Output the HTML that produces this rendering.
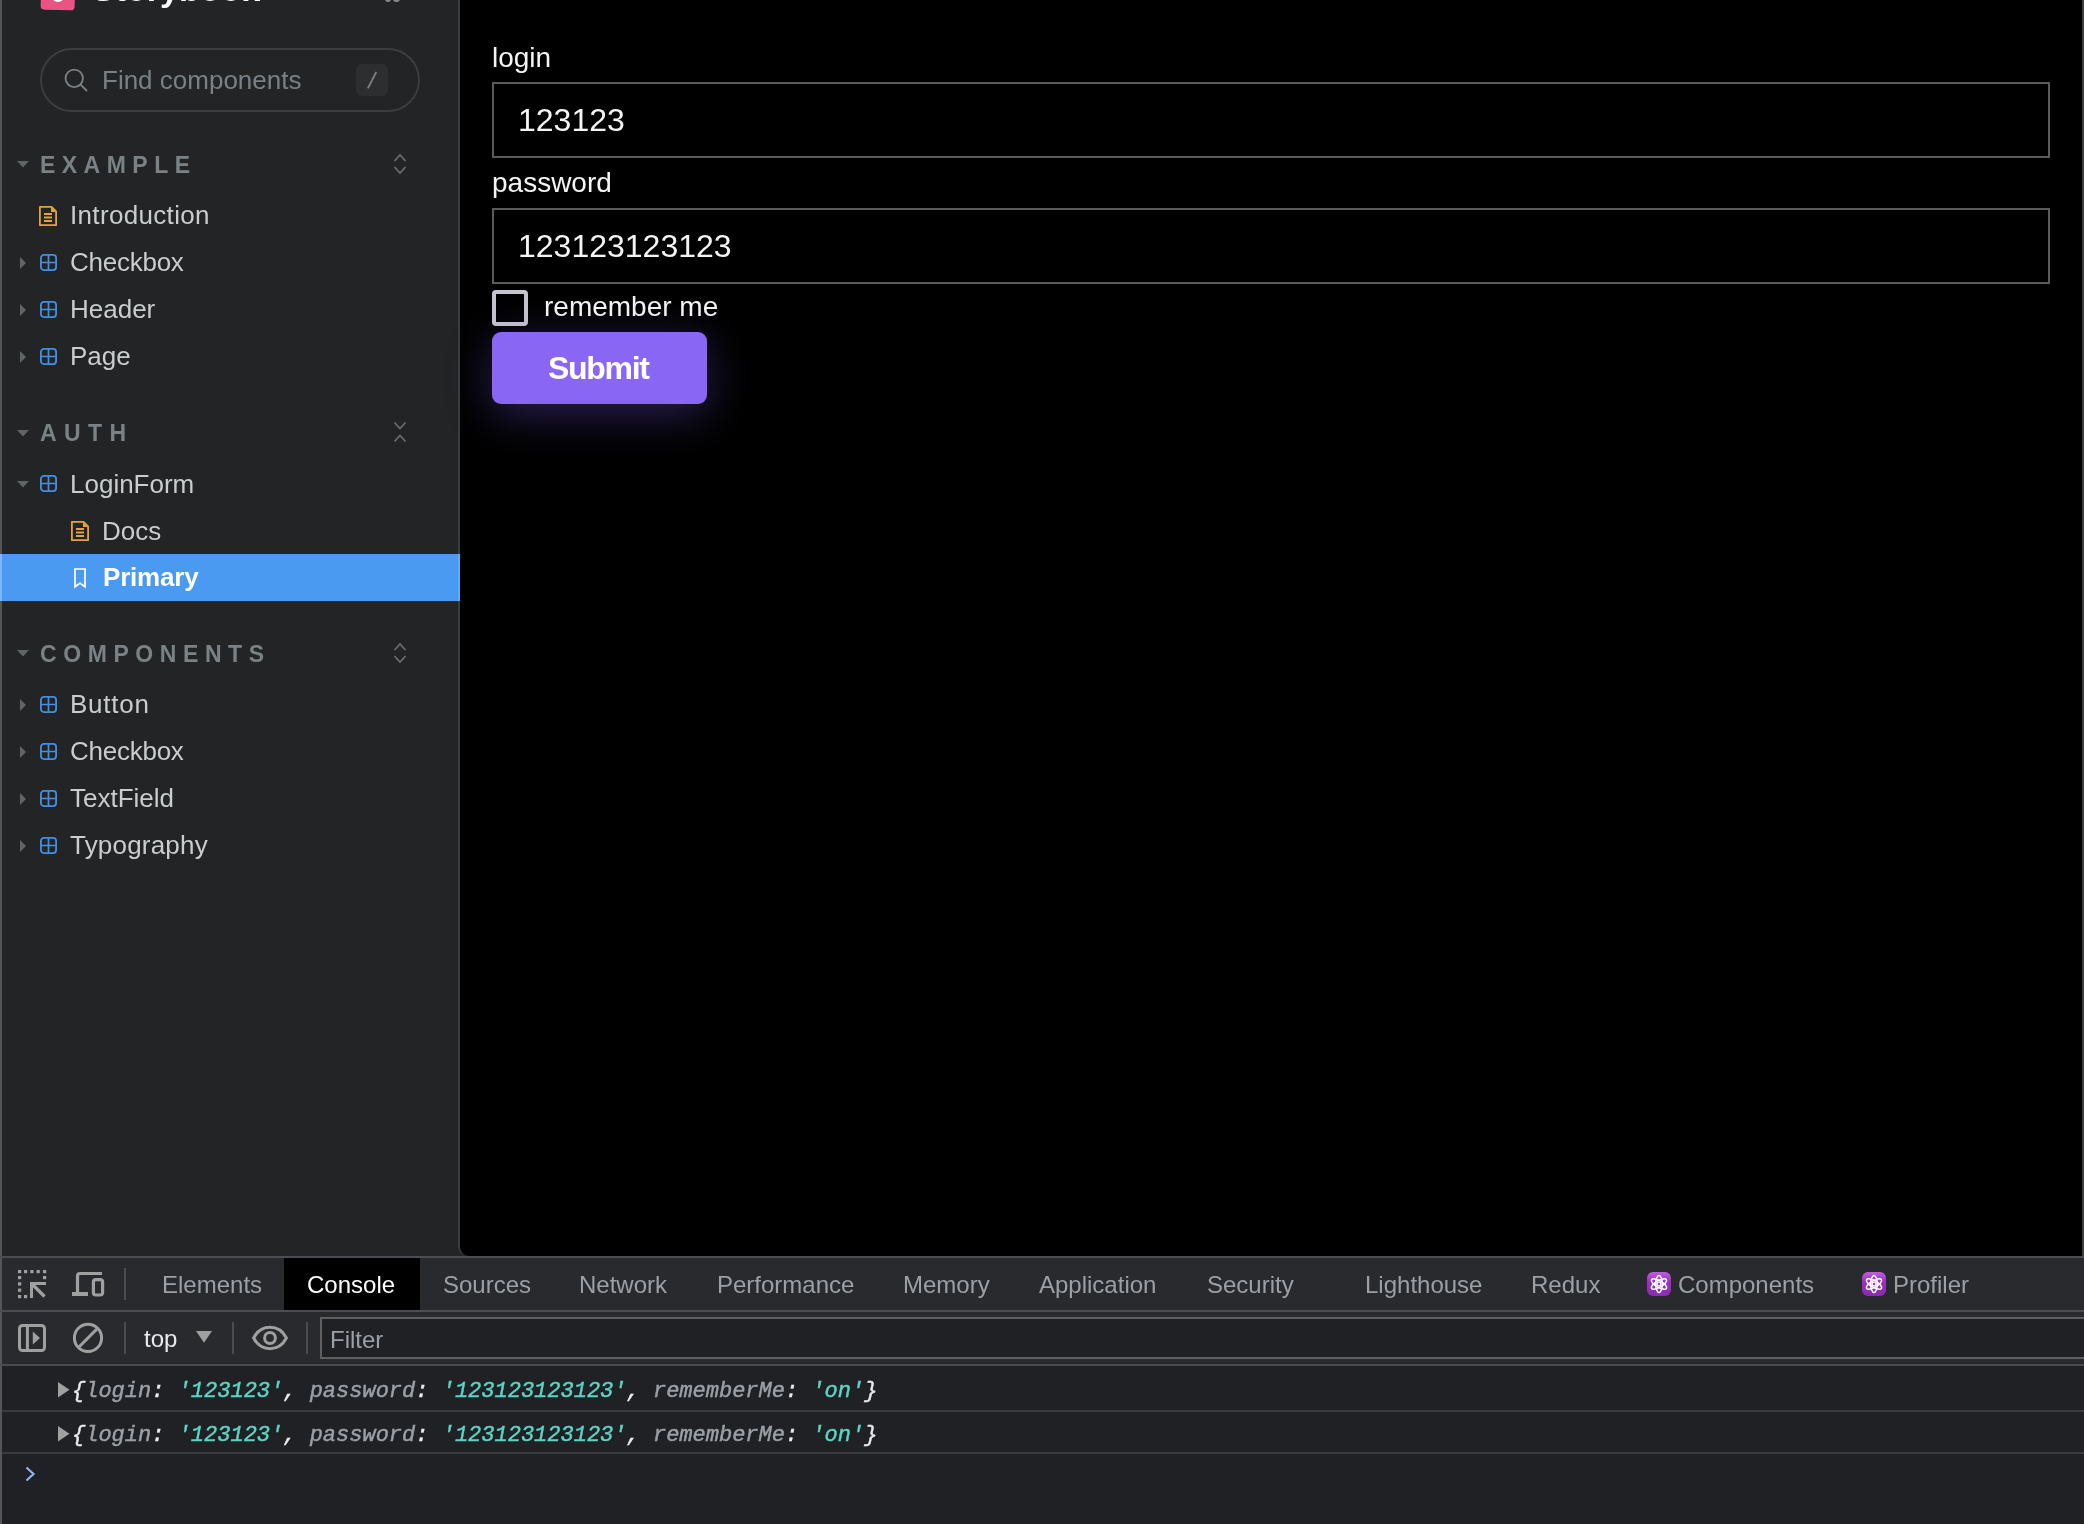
<!DOCTYPE html><html><head><meta charset="utf-8"><style>
*{margin:0;padding:0;box-sizing:border-box}
html,body{width:2084px;height:1524px;overflow:hidden;background:#222425;font-family:"Liberation Sans",sans-serif}
.a{position:absolute}
.t{position:absolute;white-space:pre;will-change:transform}
svg{position:absolute;overflow:visible}
</style></head><body><div class="a" style="left:0;top:0;width:2px;height:1524px;background:#545557"></div>
<div class="a" style="left:458px;top:-20px;width:1624px;height:1276px;background:#000;border-left:2px solid #3b3c3e;border-bottom-left-radius:10px"></div>
<div class="a" style="left:2082px;top:0;width:2px;height:1256px;background:#3c3d3e"></div>
<div class="a" style="left:41px;top:-26px;width:34px;height:36px;background:#ea5485;border-radius:4px;transform:rotate(1.5deg)"></div>
<div class="a" style="left:52px;top:-6px;width:12px;height:8px;background:#fff;border-radius:0 0 6px 6px"></div>
<div class="t" style="left:92px;top:-27.98px;font-size:34px;line-height:34px;color:#ffffff;font-weight:700;font-family:'Liberation Sans', sans-serif;letter-spacing:0px;font-style:normal;">Storybook</div>
<div class="a" style="left:385px;top:-4px;width:6px;height:6px;border-radius:50%;background:#858b8f"></div>
<div class="a" style="left:393px;top:-4px;width:6.5px;height:6px;border-radius:50%;background:#858b8f"></div>
<div class="a" style="left:40px;top:48px;width:380px;height:64px;border:2px solid #3b3e40;border-radius:32px"></div>
<svg style="left:64px;top:68px" width="24" height="24"><circle cx="10.25" cy="10.35" r="8.7" fill="none" stroke="#798186" stroke-width="1.8"/><path d="M16.6 16.6 L22.5 22.5" stroke="#798186" stroke-width="1.8" stroke-linecap="round"/></svg>
<div class="t" style="left:102px;top:66.99px;font-size:26px;line-height:26px;color:#798186;font-weight:400;font-family:'Liberation Sans', sans-serif;letter-spacing:0px;font-style:normal;">Find components</div>
<div class="a" style="left:356px;top:64px;width:32px;height:32px;background:#2c2e30;border-radius:6px"></div>
<svg style="left:356px;top:64px" width="32" height="32"><path d="M20.3 8 L11.8 24.3" stroke="#798186" stroke-width="1.8"/></svg>
<svg style="left:17px;top:161px" width="12" height="7"><path d="M0 0 L12 0 L6 6.5 Z" fill="#5f6466"/></svg>
<div class="t" style="left:40px;top:153.53px;font-size:23px;line-height:23px;color:#7b8286;font-weight:700;font-family:'Liberation Sans', sans-serif;letter-spacing:6.47px;font-style:normal;">EXAMPLE</div>
<svg style="left:393px;top:153px" width="14" height="22"><path d="M1.5 8 L7 2 L12.5 8 M1.5 14 L7 20 L12.5 14" fill="none" stroke="#6e7174" stroke-width="1.6"/></svg>
<svg style="left:39px;top:205.8px" width="18" height="21"><path d="M0.9 0.9 H12.6 L17.1 5.4 V19.2 H0.9 Z" fill="none" stroke="#e0a43e" stroke-width="1.8" stroke-linejoin="round"/><path d="M12 1 V6 H17 Z" fill="#e0a43e"/><path d="M5 8 H13 M5 11.5 H13 M5 15 H13" stroke="#e0a43e" stroke-width="1.8"/></svg>
<div class="t" style="left:70px;top:202.49px;font-size:26px;line-height:26px;color:#c9cdcf;font-weight:400;font-family:'Liberation Sans', sans-serif;letter-spacing:0.33px;font-style:normal;">Introduction</div>
<svg style="left:20px;top:256.8px" width="6" height="12"><path d="M0 0 L6 6 L0 12 Z" fill="#5f6466"/></svg>
<svg style="left:39.5px;top:253.5px" width="17" height="17"><rect x="0.9" y="0.9" width="15.2" height="15.2" rx="3" fill="none" stroke="#4290e4" stroke-width="1.8"/><path d="M8.5 1 V16 M1 8.5 H16" stroke="#4290e4" stroke-width="1.7"/></svg>
<div class="t" style="left:70px;top:249.49px;font-size:26px;line-height:26px;color:#c9cdcf;font-weight:400;font-family:'Liberation Sans', sans-serif;letter-spacing:-0.25px;font-style:normal;">Checkbox</div>
<svg style="left:20px;top:303.8px" width="6" height="12"><path d="M0 0 L6 6 L0 12 Z" fill="#5f6466"/></svg>
<svg style="left:39.5px;top:300.5px" width="17" height="17"><rect x="0.9" y="0.9" width="15.2" height="15.2" rx="3" fill="none" stroke="#4290e4" stroke-width="1.8"/><path d="M8.5 1 V16 M1 8.5 H16" stroke="#4290e4" stroke-width="1.7"/></svg>
<div class="t" style="left:70px;top:296.49px;font-size:26px;line-height:26px;color:#c9cdcf;font-weight:400;font-family:'Liberation Sans', sans-serif;letter-spacing:0px;font-style:normal;">Header</div>
<svg style="left:20px;top:350.8px" width="6" height="12"><path d="M0 0 L6 6 L0 12 Z" fill="#5f6466"/></svg>
<svg style="left:39.5px;top:347.5px" width="17" height="17"><rect x="0.9" y="0.9" width="15.2" height="15.2" rx="3" fill="none" stroke="#4290e4" stroke-width="1.8"/><path d="M8.5 1 V16 M1 8.5 H16" stroke="#4290e4" stroke-width="1.7"/></svg>
<div class="t" style="left:70px;top:343.49px;font-size:26px;line-height:26px;color:#c9cdcf;font-weight:400;font-family:'Liberation Sans', sans-serif;letter-spacing:0px;font-style:normal;">Page</div>
<svg style="left:17px;top:429.6px" width="12" height="7"><path d="M0 0 L12 0 L6 6.5 Z" fill="#5f6466"/></svg>
<div class="t" style="left:40px;top:422.13px;font-size:23px;line-height:23px;color:#7b8286;font-weight:700;font-family:'Liberation Sans', sans-serif;letter-spacing:7.4px;font-style:normal;">AUTH</div>
<svg style="left:393px;top:420.6px" width="14" height="22"><path d="M1.5 1.5 L7 7.5 L12.5 1.5 M1.5 20.5 L7 14.5 L12.5 20.5" fill="none" stroke="#6e7174" stroke-width="1.6"/></svg>
<svg style="left:17px;top:480.5px" width="12" height="7"><path d="M0 0 L12 0 L6 6.5 Z" fill="#5f6466"/></svg>
<svg style="left:39.5px;top:475.0px" width="17" height="17"><rect x="0.9" y="0.9" width="15.2" height="15.2" rx="3" fill="none" stroke="#4290e4" stroke-width="1.8"/><path d="M8.5 1 V16 M1 8.5 H16" stroke="#4290e4" stroke-width="1.7"/></svg>
<div class="t" style="left:70px;top:470.99px;font-size:26px;line-height:26px;color:#c9cdcf;font-weight:400;font-family:'Liberation Sans', sans-serif;letter-spacing:0px;font-style:normal;">LoginForm</div>
<svg style="left:71px;top:521.3px" width="18" height="21"><path d="M0.9 0.9 H12.6 L17.1 5.4 V19.2 H0.9 Z" fill="none" stroke="#e0a43e" stroke-width="1.8" stroke-linejoin="round"/><path d="M12 1 V6 H17 Z" fill="#e0a43e"/><path d="M5 8 H13 M5 11.5 H13 M5 15 H13" stroke="#e0a43e" stroke-width="1.8"/></svg>
<div class="t" style="left:102px;top:517.99px;font-size:26px;line-height:26px;color:#c9cdcf;font-weight:400;font-family:'Liberation Sans', sans-serif;letter-spacing:0px;font-style:normal;">Docs</div>
<div class="a" style="left:0;top:554px;width:460px;height:47px;background:#4a9af2"></div>
<div class="a" style="left:458px;top:554px;width:2px;height:47px;background:#62aaf6"></div>
<div class="a" style="left:0;top:554px;width:2px;height:47px;background:#7db6f5"></div>
<svg style="left:74px;top:568px" width="12" height="20"><path d="M1 1 H11 V18.8 L6 15 L1 18.8 Z" fill="none" stroke="#fff" stroke-width="1.7" stroke-linejoin="miter"/></svg>
<div class="t" style="left:102.5px;top:564.19px;font-size:26px;line-height:26px;color:#ffffff;font-weight:700;font-family:'Liberation Sans', sans-serif;letter-spacing:-0.2px;font-style:normal;">Primary</div>
<svg style="left:17px;top:650.3px" width="12" height="7"><path d="M0 0 L12 0 L6 6.5 Z" fill="#5f6466"/></svg>
<div class="t" style="left:40px;top:642.83px;font-size:23px;line-height:23px;color:#7b8286;font-weight:700;font-family:'Liberation Sans', sans-serif;letter-spacing:6.58px;font-style:normal;">COMPONENTS</div>
<svg style="left:393px;top:642.3px" width="14" height="22"><path d="M1.5 8 L7 2 L12.5 8 M1.5 14 L7 20 L12.5 14" fill="none" stroke="#6e7174" stroke-width="1.6"/></svg>
<svg style="left:20px;top:698.8px" width="6" height="12"><path d="M0 0 L6 6 L0 12 Z" fill="#5f6466"/></svg>
<svg style="left:39.5px;top:695.5px" width="17" height="17"><rect x="0.9" y="0.9" width="15.2" height="15.2" rx="3" fill="none" stroke="#4290e4" stroke-width="1.8"/><path d="M8.5 1 V16 M1 8.5 H16" stroke="#4290e4" stroke-width="1.7"/></svg>
<div class="t" style="left:70px;top:691.49px;font-size:26px;line-height:26px;color:#c9cdcf;font-weight:400;font-family:'Liberation Sans', sans-serif;letter-spacing:0.75px;font-style:normal;">Button</div>
<svg style="left:20px;top:745.8px" width="6" height="12"><path d="M0 0 L6 6 L0 12 Z" fill="#5f6466"/></svg>
<svg style="left:39.5px;top:742.5px" width="17" height="17"><rect x="0.9" y="0.9" width="15.2" height="15.2" rx="3" fill="none" stroke="#4290e4" stroke-width="1.8"/><path d="M8.5 1 V16 M1 8.5 H16" stroke="#4290e4" stroke-width="1.7"/></svg>
<div class="t" style="left:70px;top:738.49px;font-size:26px;line-height:26px;color:#c9cdcf;font-weight:400;font-family:'Liberation Sans', sans-serif;letter-spacing:-0.25px;font-style:normal;">Checkbox</div>
<svg style="left:20px;top:792.8px" width="6" height="12"><path d="M0 0 L6 6 L0 12 Z" fill="#5f6466"/></svg>
<svg style="left:39.5px;top:789.5px" width="17" height="17"><rect x="0.9" y="0.9" width="15.2" height="15.2" rx="3" fill="none" stroke="#4290e4" stroke-width="1.8"/><path d="M8.5 1 V16 M1 8.5 H16" stroke="#4290e4" stroke-width="1.7"/></svg>
<div class="t" style="left:70px;top:785.49px;font-size:26px;line-height:26px;color:#c9cdcf;font-weight:400;font-family:'Liberation Sans', sans-serif;letter-spacing:0px;font-style:normal;">TextField</div>
<svg style="left:20px;top:839.8px" width="6" height="12"><path d="M0 0 L6 6 L0 12 Z" fill="#5f6466"/></svg>
<svg style="left:39.5px;top:836.5px" width="17" height="17"><rect x="0.9" y="0.9" width="15.2" height="15.2" rx="3" fill="none" stroke="#4290e4" stroke-width="1.8"/><path d="M8.5 1 V16 M1 8.5 H16" stroke="#4290e4" stroke-width="1.7"/></svg>
<div class="t" style="left:70px;top:832.49px;font-size:26px;line-height:26px;color:#c9cdcf;font-weight:400;font-family:'Liberation Sans', sans-serif;letter-spacing:0.2px;font-style:normal;">Typography</div>
<div class="t" style="left:492px;top:43.60px;font-size:28px;line-height:28px;color:#f4f4f4;font-weight:400;font-family:'Liberation Sans', sans-serif;letter-spacing:0px;font-style:normal;">login</div>
<div class="a" style="left:492px;top:82px;width:1558px;height:76px;border:2px solid #5a5a5a"></div>
<div class="t" style="left:518px;top:104.31px;font-size:32px;line-height:32px;color:#f4f4f4;font-weight:400;font-family:'Liberation Sans', sans-serif;letter-spacing:0px;font-style:normal;">123123</div>
<div class="t" style="left:492px;top:169.00px;font-size:28px;line-height:28px;color:#f4f4f4;font-weight:400;font-family:'Liberation Sans', sans-serif;letter-spacing:0px;font-style:normal;">password</div>
<div class="a" style="left:492px;top:208px;width:1558px;height:76px;border:2px solid #5a5a5a"></div>
<div class="t" style="left:518px;top:229.71px;font-size:32px;line-height:32px;color:#f4f4f4;font-weight:400;font-family:'Liberation Sans', sans-serif;letter-spacing:0px;font-style:normal;">123123123123</div>
<div class="a" style="left:492px;top:290px;width:36px;height:36px;border:4px solid #c6c4cb;border-radius:4px"></div>
<div class="t" style="left:544px;top:293.00px;font-size:28px;line-height:28px;color:#f4f4f4;font-weight:400;font-family:'Liberation Sans', sans-serif;letter-spacing:0px;font-style:normal;">remember me</div>
<div class="a" style="left:492px;top:332px;width:215px;height:72px;background:#8a66f4;border-radius:9px;box-shadow:0 10px 44px rgba(120,90,230,0.36)"></div>
<div class="t" style="left:548px;top:351.91px;font-size:32px;line-height:32px;color:#ffffff;font-weight:700;font-family:'Liberation Sans', sans-serif;letter-spacing:-1.3px;font-style:normal;">Submit</div>
<div class="a" style="left:0;top:1256px;width:2084px;height:2px;background:#4a4c50"></div>
<div class="a" style="left:2px;top:1258px;width:2082px;height:106px;background:#292a2d"></div>
<div class="a" style="left:0;top:1310px;width:2084px;height:2px;background:#4a4c50"></div>
<div class="a" style="left:0;top:1364px;width:2084px;height:2px;background:#4a4c50"></div>
<div class="a" style="left:2px;top:1366px;width:2082px;height:158px;background:#202124"></div>
<div class="a" style="left:2px;top:1410px;width:2082px;height:2px;background:#3a3b3d"></div>
<div class="a" style="left:2px;top:1452px;width:2082px;height:2px;background:#3a3b3d"></div>
<div class="a" style="left:284px;top:1258px;width:136px;height:52px;background:#000"></div>
<svg style="left:18px;top:1270px" width="29" height="29"><rect x="0" y="0" width="3.2" height="3.2" fill="#a0a0a0"/><rect x="6" y="0" width="3.2" height="3.2" fill="#a0a0a0"/><rect x="12.3" y="0" width="3.2" height="3.2" fill="#a0a0a0"/><rect x="18.6" y="0" width="3.2" height="3.2" fill="#a0a0a0"/><rect x="25" y="0" width="3.2" height="3.2" fill="#a0a0a0"/><rect x="0" y="6" width="3.2" height="3.2" fill="#a0a0a0"/><rect x="25" y="6" width="3.2" height="3.2" fill="#a0a0a0"/><rect x="0" y="12.299999999999955" width="3.2" height="3.2" fill="#a0a0a0"/><rect x="0" y="18.59999999999991" width="3.2" height="3.2" fill="#a0a0a0"/><rect x="0" y="25" width="3.2" height="3.2" fill="#a0a0a0"/><rect x="6" y="25" width="3.2" height="3.2" fill="#a0a0a0"/><path d="M12 12 H28 V15 H15 V28 H12 Z" fill="#a0a0a0"/><path d="M14.5 14.5 L26.5 26.5" stroke="#a0a0a0" stroke-width="3.2"/></svg>
<svg style="left:72px;top:1271px" width="34" height="27"><path d="M30 2.5 H8 Q5.5 2.5 5.5 5 V22" fill="none" stroke="#a0a0a0" stroke-width="3.2"/><rect x="0" y="21" width="16" height="4" fill="#a0a0a0"/><rect x="21.4" y="8.6" width="9.2" height="15.4" rx="2.5" fill="none" stroke="#a0a0a0" stroke-width="3.2"/></svg>
<div class="a" style="left:124px;top:1268px;width:2px;height:32px;background:#4a4c50"></div>
<div class="t" style="left:162px;top:1272.68px;font-size:24px;line-height:24px;color:#9aa0a6;font-weight:400;font-family:'Liberation Sans', sans-serif;letter-spacing:0px;font-style:normal;">Elements</div>
<div class="t" style="left:307px;top:1272.68px;font-size:24px;line-height:24px;color:#ffffff;font-weight:400;font-family:'Liberation Sans', sans-serif;letter-spacing:0px;font-style:normal;">Console</div>
<div class="t" style="left:443px;top:1272.68px;font-size:24px;line-height:24px;color:#9aa0a6;font-weight:400;font-family:'Liberation Sans', sans-serif;letter-spacing:0px;font-style:normal;">Sources</div>
<div class="t" style="left:579px;top:1272.68px;font-size:24px;line-height:24px;color:#9aa0a6;font-weight:400;font-family:'Liberation Sans', sans-serif;letter-spacing:0px;font-style:normal;">Network</div>
<div class="t" style="left:717px;top:1272.68px;font-size:24px;line-height:24px;color:#9aa0a6;font-weight:400;font-family:'Liberation Sans', sans-serif;letter-spacing:0px;font-style:normal;">Performance</div>
<div class="t" style="left:903px;top:1272.68px;font-size:24px;line-height:24px;color:#9aa0a6;font-weight:400;font-family:'Liberation Sans', sans-serif;letter-spacing:0px;font-style:normal;">Memory</div>
<div class="t" style="left:1039px;top:1272.68px;font-size:24px;line-height:24px;color:#9aa0a6;font-weight:400;font-family:'Liberation Sans', sans-serif;letter-spacing:0px;font-style:normal;">Application</div>
<div class="t" style="left:1207px;top:1272.68px;font-size:24px;line-height:24px;color:#9aa0a6;font-weight:400;font-family:'Liberation Sans', sans-serif;letter-spacing:0px;font-style:normal;">Security</div>
<div class="t" style="left:1365px;top:1272.68px;font-size:24px;line-height:24px;color:#9aa0a6;font-weight:400;font-family:'Liberation Sans', sans-serif;letter-spacing:0px;font-style:normal;">Lighthouse</div>
<div class="t" style="left:1531px;top:1272.68px;font-size:24px;line-height:24px;color:#9aa0a6;font-weight:400;font-family:'Liberation Sans', sans-serif;letter-spacing:0px;font-style:normal;">Redux</div>
<div class="t" style="left:1678px;top:1272.68px;font-size:24px;line-height:24px;color:#9aa0a6;font-weight:400;font-family:'Liberation Sans', sans-serif;letter-spacing:0px;font-style:normal;">Components</div>
<div class="t" style="left:1893px;top:1272.68px;font-size:24px;line-height:24px;color:#9aa0a6;font-weight:400;font-family:'Liberation Sans', sans-serif;letter-spacing:0px;font-style:normal;">Profiler</div>
<div class="a" style="left:1647px;top:1272px;width:24px;height:24px;border-radius:6px;background:linear-gradient(#c060e0,#9a30c0 40%,#8a2cb0)"></div>
<svg style="left:1647px;top:1272px" width="24" height="24"><g fill="none" stroke="#fff" stroke-width="1.5"><ellipse cx="12" cy="12" rx="3.3" ry="8.6"/><ellipse cx="12" cy="12" rx="3.3" ry="8.6" transform="rotate(60 12 12)"/><ellipse cx="12" cy="12" rx="3.3" ry="8.6" transform="rotate(-60 12 12)"/></g><circle cx="12" cy="12" r="2.6" fill="#fff"/><circle cx="12" cy="12" r="1.2" fill="#a030c8"/></svg>
<div class="a" style="left:1862px;top:1272px;width:24px;height:24px;border-radius:6px;background:linear-gradient(#c060e0,#9a30c0 40%,#8a2cb0)"></div>
<svg style="left:1862px;top:1272px" width="24" height="24"><g fill="none" stroke="#fff" stroke-width="1.5"><ellipse cx="12" cy="12" rx="3.3" ry="8.6"/><ellipse cx="12" cy="12" rx="3.3" ry="8.6" transform="rotate(60 12 12)"/><ellipse cx="12" cy="12" rx="3.3" ry="8.6" transform="rotate(-60 12 12)"/></g><circle cx="12" cy="12" r="2.6" fill="#fff"/><circle cx="12" cy="12" r="1.2" fill="#a030c8"/></svg>
<svg style="left:18px;top:1324px" width="28" height="28"><rect x="1.5" y="1.5" width="25" height="25" rx="3" fill="none" stroke="#a0a0a0" stroke-width="3"/><path d="M9.4 1 V27" stroke="#a0a0a0" stroke-width="3"/><path d="M14.8 7.4 L22 14 L14.8 20.6 Z" fill="#a0a0a0"/></svg>
<svg style="left:72px;top:1322px" width="32" height="32"><circle cx="16" cy="15.9" r="13.6" fill="none" stroke="#a0a0a0" stroke-width="3"/><path d="M7.2 24.7 L24.8 7.1" stroke="#a0a0a0" stroke-width="3"/></svg>
<div class="a" style="left:124px;top:1322px;width:2px;height:32px;background:#4a4c50"></div>
<div class="t" style="left:144px;top:1327.18px;font-size:24px;line-height:24px;color:#e8eaed;font-weight:400;font-family:'Liberation Sans', sans-serif;letter-spacing:0px;font-style:normal;">top</div>
<svg style="left:196px;top:1331px" width="16" height="12"><path d="M0 0 H16 L8 11.7 Z" fill="#a0a0a0"/></svg>
<div class="a" style="left:232px;top:1322px;width:2px;height:32px;background:#4a4c50"></div>
<svg style="left:252px;top:1326px" width="36" height="24"><path d="M1.6 12 C9 -2.2, 27 -2.2, 34.4 12 C27 26.2, 9 26.2, 1.6 12 Z" fill="none" stroke="#a0a0a0" stroke-width="3"/><circle cx="18" cy="12" r="5.4" fill="none" stroke="#a0a0a0" stroke-width="3"/></svg>
<div class="a" style="left:306px;top:1322px;width:2px;height:32px;background:#4a4c50"></div>
<div class="a" style="left:320px;top:1317px;width:1770px;height:42px;border:2px solid #5f5f5f;background:#202124"></div>
<div class="t" style="left:330px;top:1327.68px;font-size:24px;line-height:24px;color:#9aa0a6;font-weight:400;font-family:'Liberation Sans', sans-serif;letter-spacing:0px;font-style:normal;">Filter</div>
<svg style="left:57.5px;top:1381.5px" width="12" height="16"><path d="M0 0 L11.5 7.75 L0 15.5 Z" fill="#a0a0a0"/></svg>
<div class="t" style="left:72px;top:1381.38px;font-size:22px;line-height:22px;color:#e8eaed;font-weight:400;font-family:'Liberation Mono', monospace;letter-spacing:0px;font-style:italic;-webkit-text-stroke:0.45px currentColor"><span style="color:#e8eaed">{</span><span style="color:#9aa0a6">login</span><span style="color:#e8eaed">: </span><span style="color:#5cd5c5">'123123'</span><span style="color:#e8eaed">, </span><span style="color:#9aa0a6">password</span><span style="color:#e8eaed">: </span><span style="color:#5cd5c5">'123123123123'</span><span style="color:#e8eaed">, </span><span style="color:#9aa0a6">rememberMe</span><span style="color:#e8eaed">: </span><span style="color:#5cd5c5">'on'</span><span style="color:#e8eaed">}</span></div>
<svg style="left:57.5px;top:1425.5px" width="12" height="16"><path d="M0 0 L11.5 7.75 L0 15.5 Z" fill="#a0a0a0"/></svg>
<div class="t" style="left:72px;top:1425.38px;font-size:22px;line-height:22px;color:#e8eaed;font-weight:400;font-family:'Liberation Mono', monospace;letter-spacing:0px;font-style:italic;-webkit-text-stroke:0.45px currentColor"><span style="color:#e8eaed">{</span><span style="color:#9aa0a6">login</span><span style="color:#e8eaed">: </span><span style="color:#5cd5c5">'123123'</span><span style="color:#e8eaed">, </span><span style="color:#9aa0a6">password</span><span style="color:#e8eaed">: </span><span style="color:#5cd5c5">'123123123123'</span><span style="color:#e8eaed">, </span><span style="color:#9aa0a6">rememberMe</span><span style="color:#e8eaed">: </span><span style="color:#5cd5c5">'on'</span><span style="color:#e8eaed">}</span></div>
<svg style="left:25px;top:1466px" width="11" height="16"><path d="M1.5 1.5 L8.5 8 L1.5 14.5" fill="none" stroke="#8ab4f8" stroke-width="2.2"/></svg></body></html>
